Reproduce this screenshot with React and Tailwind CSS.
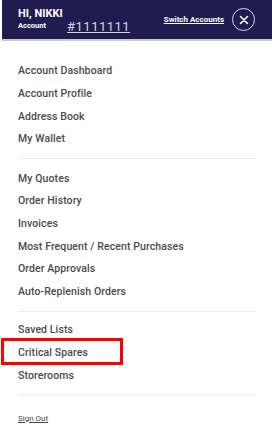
import React from "react";

const groups = [
  ["Account Dashboard", "Account Profile", "Address Book", "My Wallet"],
  ["My Quotes", "Order History", "Invoices", "Most Frequent / Recent Purchases", "Order Approvals", "Auto-Replenish Orders"],
  ["Saved Lists", "Critical Spares", "Storerooms"],
];

export default function App() {
  return (
    <div className="w-[272px] h-[435px] bg-white relative overflow-hidden" style={{ fontFamily: "Roboto, 'Noto Sans', sans-serif" }}>
      <div className="ml-[2px] h-[41px] bg-[#211c4f] flex items-start justify-between pl-[16px] pr-[17px] border-b-2 border-[#c9c9cf]">
        <div className="flex flex-col">
          <div className="text-white font-bold text-[11px] leading-none mt-[8px]">HI, NIKKI</div>
          <div className="flex items-end mt-[1px]">
            <span className="text-white text-[7.5px] font-bold leading-none mb-[4px]">Account</span>
            <span className="text-[#d4d4dc] text-[13px] leading-none underline ml-[21px] tracking-[0.5px]">#1111111</span>
          </div>
        </div>
        <div className="flex items-center mt-[8px]">
          <span className="text-white text-[8px] font-bold underline leading-none mr-[8px]">Switch Accounts</span>
          <div className="w-[23px] h-[23px] rounded-full border border-[#d8d8e0] flex items-center justify-center">
            <svg width="10" height="10" viewBox="0 0 10 10">
              <path d="M1.5 1.5 L8.5 8.5 M8.5 1.5 L1.5 8.5" stroke="white" strokeWidth="1.6" strokeLinecap="round" />
            </svg>
          </div>
        </div>
      </div>

      <div className="pl-[18px] pr-[17px] pt-[19px]">
        {groups.map((g, gi) => (
          <div key={gi}>
            <div className={gi === 0 ? "" : gi === 1 ? "pt-[8px]" : "pt-[7px]"}>
              {g.map((t) => (
                <div key={t} className="h-[22.6px] flex items-center text-[10.5px] font-medium text-[#4a4a4f] tracking-[0.1px]">
                  {t}
                </div>
              ))}
            </div>
            <div className="mt-[8px] h-px bg-[#ececec]" />
          </div>
        ))}
        <div className="mt-[17px] text-[8px] text-[#444448] underline">Sign Out</div>
      </div>

      <div className="absolute left-[1px] top-[338px] w-[122px] h-[27px] border-[3px] border-[#ff0000]" />
    </div>
  );
}
